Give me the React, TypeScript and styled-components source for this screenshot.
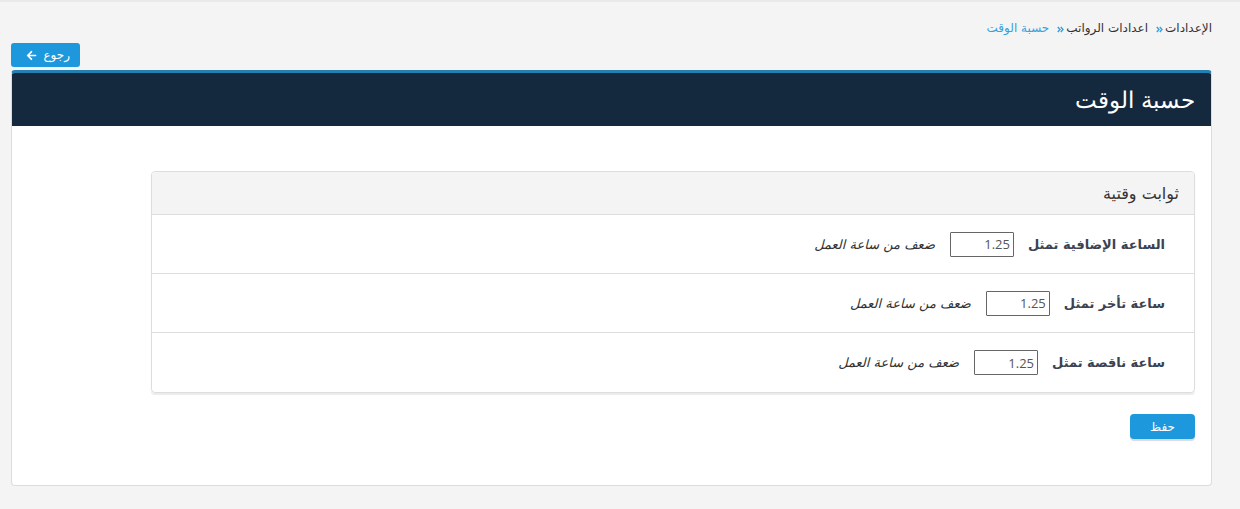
import React from 'react';
import styled, { createGlobalStyle } from 'styled-components';
import { FaArrowLeft } from 'react-icons/fa';

const GlobalStyle = createGlobalStyle`
  html, body {
    margin: 0;
    padding: 0;
    background: #f4f4f4;
  }
  body {
    font-family: "DejaVu Sans", "Noto Sans", sans-serif;
    color: #333;
  }
  * {
    box-sizing: border-box;
  }
`;

interface RowData {
  label: string;
  value: string;
}

const rows: RowData[] = [
  { label: 'الساعة الإضافية تمثل', value: '1.25' },
  { label: 'ساعة تأخر تمثل', value: '1.25' },
  { label: 'ساعة ناقصة تمثل', value: '1.25' },
];

// double chevron used between breadcrumb items
const Chevrons = () => (
  <Separator width="7" height="7" viewBox="0 0 7 7">
    <path d="M0.8 1 L3 3.5 L0.8 6 M3.8 1 L6 3.5 L3.8 6" fill="none" stroke="currentColor" strokeWidth="1.4" />
  </Separator>
);

const App = () => {
  return (
    <>
      <GlobalStyle />
      <Page dir="rtl">
        <Breadcrumb>
          <Crumb>الإعدادات</Crumb>
          <Chevrons />
          <Crumb>اعدادات الرواتب</Crumb>
          <Chevrons />
          <Crumb $active>حسبة الوقت</Crumb>
        </Breadcrumb>

        <Toolbar>
          <BackButton>
            <span>رجوع</span>
            <FaArrowLeft size={11} />
          </BackButton>
        </Toolbar>

        <Panel>
          <PanelHeader>
            <PanelTitle>حسبة الوقت</PanelTitle>
          </PanelHeader>
          <PanelBody>
            <Card>
              <CardHeader>ثوابت وقتية</CardHeader>
              {rows.map((row, idx) => (
                <Row key={idx}>
                  <Label>{row.label}</Label>
                  <ValueInput defaultValue={row.value} />
                  <Hint>ضعف من ساعة العمل</Hint>
                </Row>
              ))}
            </Card>
            <Actions>
              <SaveButton>حفظ</SaveButton>
            </Actions>
          </PanelBody>
        </Panel>
      </Page>
    </>
  );
};

const Page = styled.div`
  min-height: 509px;
  border-top: 2px solid #e9e9e9;
  padding: 16px 28px 24px 11px;
`;

const Breadcrumb = styled.div`
  display: flex;
  align-items: center;
  height: 20px;
  font-size: 12px;
  margin-bottom: 5px;
`;

const Crumb = styled.span<{ $active?: boolean }>`
  color: ${(p) => (p.$active ? '#3a9fdd' : '#333')};
`;

const Separator = styled.svg`
  color: #3a9fdd;
  margin: 2px 2px 0 8px;
  flex-shrink: 0;
`;

const Toolbar = styled.div`
  display: flex;
  justify-content: flex-end;
  margin-bottom: 3px;
`;

const BackButton = styled.button`
  display: flex;
  align-items: center;
  gap: 6px;
  width: 69px;
  height: 24px;
  padding: 0 10px;
  border: 0;
  border-radius: 3px;
  background: #1e98dd;
  color: #fff;
  font-family: inherit;
  font-size: 12px;
  cursor: pointer;
`;

const Panel = styled.div`
  background: #fff;
  border: 1px solid #dcdcdc;
  border-top: 3px solid #2380b0;
  border-radius: 4px;
  overflow: hidden;
`;

const PanelHeader = styled.div`
  display: flex;
  align-items: center;
  height: 53px;
  padding: 0 16px;
  background: #15293e;
`;

const PanelTitle = styled.h1`
  margin: 0;
  color: #fff;
  font-size: 23px;
  font-weight: 300;
`;

const PanelBody = styled.div`
  padding: 45px 16px 46px 139px;
`;

const Card = styled.div`
  border: 1px solid #dddddd;
  border-radius: 4px;
  box-shadow: 0 2px 1px rgba(0, 0, 0, 0.08);
  overflow: hidden;
`;

const CardHeader = styled.div`
  height: 43px;
  display: flex;
  align-items: center;
  padding: 0 15px;
  background: #f4f4f4;
  border-bottom: 1px solid #dddddd;
  font-size: 16px;
  color: #333;
`;

const Row = styled.div`
  display: flex;
  align-items: center;
  height: 59px;
  padding: 0 29px;
  border-bottom: 1px solid #dddddd;

  &:last-child {
    border-bottom: 0;
  }
`;

const Label = styled.label`
  font-size: 13px;
  font-weight: bold;
  color: #3b4352;
  margin-left: 14px;
`;

const ValueInput = styled.input`
  width: 64px;
  height: 25px;
  padding: 0 3px;
  border: 1px solid #666;
  border-radius: 1px;
  text-align: right;
  direction: ltr;
  font-family: 'Open Sans', sans-serif;
  font-size: 13px;
  color: #555;
  margin-left: 15px;
`;

const Hint = styled.span`
  font-size: 13px;
  font-style: italic;
  color: #333;
`;

const Actions = styled.div`
  display: flex;
  margin-top: 21px;
`;

const SaveButton = styled.button`
  width: 65px;
  height: 25px;
  border: 0;
  border-radius: 4px;
  background: #1e98dd;
  box-shadow: 0 2px 1px rgba(0, 0, 0, 0.15);
  color: #fff;
  font-family: inherit;
  font-size: 12px;
  cursor: pointer;
`;

export default App;
